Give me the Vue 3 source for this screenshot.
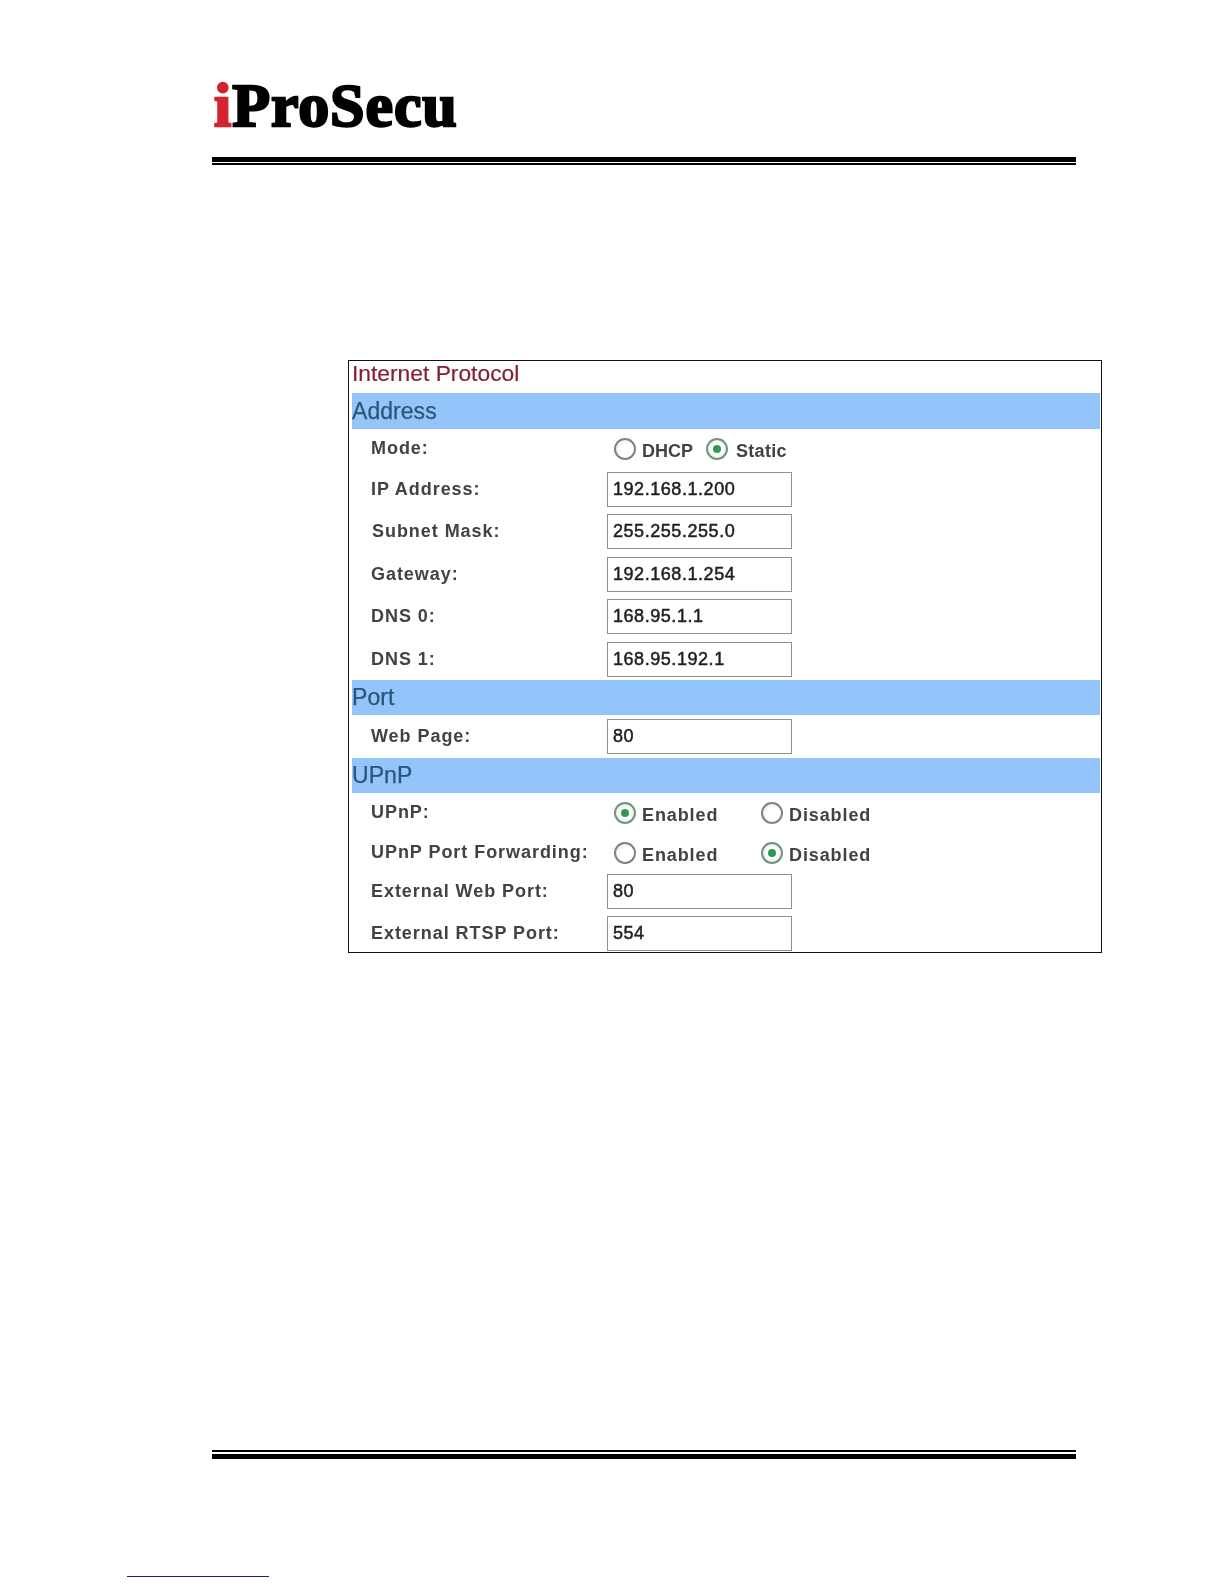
<script setup>
const addressRows = [
  { label: 'IP Address:', value: '192.168.1.200' },
  { label: 'Subnet Mask:', value: '255.255.255.0', nudge: true },
  { label: 'Gateway:', value: '192.168.1.254' },
  { label: 'DNS 0:', value: '168.95.1.1' },
  { label: 'DNS 1:', value: '168.95.192.1' }
]
const upnpRadios = [
  { label: 'UPnP:', enabled: true },
  { label: 'UPnP Port Forwarding:', enabled: false }
]
const upnpInputs = [
  { label: 'External Web Port:', value: '80' },
  { label: 'External RTSP Port:', value: '554' }
]
</script>

<template>
  <div class="page">
    <header class="head">
      <div class="logo"><span class="logo-i">i</span>ProSecu</div>
      <div class="rule-thick"></div>
      <div class="rule-thin"></div>
    </header>

    <section class="panel">
      <div class="blurred">
        <div class="title">Internet Protocol</div>
        <div class="bar bar-address">Address</div>

        <div class="row row-mode">
          <span class="label">Mode:</span>
          <div class="options">
            <span class="radio"></span><span class="opt opt-dhcp">DHCP</span>
            <span class="radio on radio-static"><i class="dot"></i></span><span class="opt opt-static">Static</span>
          </div>
        </div>

        <div class="address-group">
          <div v-for="r in addressRows" :key="r.label" class="row row-input">
            <span class="label" :class="{ nudge: r.nudge }">{{ r.label }}</span>
            <div class="field">{{ r.value }}</div>
          </div>
        </div>

        <div class="bar bar-port">Port</div>
        <div class="row row-input row-web">
          <span class="label">Web Page:</span>
          <div class="field">80</div>
        </div>

        <div class="bar bar-upnp">UPnP</div>
        <div v-for="(r, i) in upnpRadios" :key="r.label" class="row" :class="i === 0 ? 'row-upnp' : 'row-fwd'">
          <span class="label">{{ r.label }}</span>
          <div class="options">
            <div class="choice">
              <span class="radio" :class="{ on: r.enabled }"><i v-if="r.enabled" class="dot"></i></span>
              <span class="opt">Enabled</span>
            </div>
            <div class="choice">
              <span class="radio" :class="{ on: !r.enabled }"><i v-if="!r.enabled" class="dot"></i></span>
              <span class="opt">Disabled</span>
            </div>
          </div>
        </div>

        <div v-for="r in upnpInputs" :key="r.label" class="row row-input">
          <span class="label">{{ r.label }}</span>
          <div class="field">{{ r.value }}</div>
        </div>
      </div>
    </section>

    <footer class="foot">
      <div class="rule-thin foot-thin"></div>
      <div class="rule-thick foot-thick"></div>
      <div class="note-line"></div>
    </footer>
  </div>
</template>

<style>
html, body { margin: 0; background: #fff; }
</style>

<style scoped>
.page {
  width: 1224px;
  height: 1584px;
  overflow: hidden;
  background: #fff;
  font-family: "Liberation Sans", Arial, sans-serif;
}
.head { margin-left: 212px; width: 864px; padding-top: 69px; }
.logo {
  height: 88px;
  padding-left: 2px;
  box-sizing: border-box;
  font-family: "Liberation Serif", "Times New Roman", serif;
  font-weight: 700;
  font-size: 62px;
  line-height: 72px;
  letter-spacing: 0.9px;
  color: #000;
  -webkit-text-stroke: 2.4px #000;
  white-space: nowrap;
}
.logo-i { color: #d2232e; -webkit-text-stroke: 2.4px #d2232e; }
.rule-thick { height: 5px; background: #000; }
.rule-thin { height: 2px; margin-top: 1px; background: #000; }

.panel {
  margin: 195px 0 0 348px;
  width: 752px;
  height: 591px;
  border: 1px solid #111;
  overflow: hidden;
  background: #fff;
}
.blurred { filter: blur(0.45px); }
.title {
  height: 32px;
  padding-left: 3px;
  font-size: 22.8px;
  line-height: 25px;
  color: #84202f;
  -webkit-text-stroke: 0.2px #84202f;
}
.bar {
  margin: 0 1px 0 3px;
  background: #93c5fb;
  font-size: 23px;
  letter-spacing: 0.05px;
  color: #2a5678;
  -webkit-text-stroke: 0.25px #2a5678;
}
.bar-address { height: 36px; line-height: 36px; }
.bar-port { height: 35px; line-height: 35px; }
.bar-upnp { height: 35px; line-height: 34px; }

.address-group { height: 208px; }

.row {
  display: flex;
  padding-left: 22px;
  box-sizing: border-box;
}
.label {
  width: 236px;
  flex: none;
  font-size: 18px;
  font-weight: 700;
  letter-spacing: 0.95px;
  color: #424242;
  white-space: nowrap;
}
.nudge { padding-left: 1px; width: 235px; }
.row-mode { height: 43px; padding-top: 9px; }
.row-upnp { height: 41px; padding-top: 9px; }
.row-fwd { height: 40.5px; padding-top: 8px; }
.row-input { height: 42.4px; align-items: flex-start; }
.row-input .label { line-height: 33px; margin-top: 1px; }
.row-web { height: 42.5px; padding-top: 4px; }

.field {
  width: 185px;
  height: 35px;
  box-sizing: border-box;
  border: 1.5px solid #8e9296;
  padding-left: 5px;
  font-size: 18px;
  line-height: 33px;
  letter-spacing: 0.55px;
  color: #1f1f1f;
  -webkit-text-stroke: 0.5px #1f1f1f;
  background: #fff;
}

.options { display: flex; align-items: flex-start; padding-left: 7px; }
.choice { display: flex; width: 147px; }
.radio {
  flex: none;
  width: 22px;
  height: 22px;
  box-sizing: border-box;
  border: 2px solid #7d8388;
  border-radius: 50%;
  background: radial-gradient(circle at 65% 65%, #fff 45%, #e2e4e6 100%);
  display: flex;
  align-items: center;
  justify-content: center;
}
.radio.on { border-color: #78907f; background: radial-gradient(circle, #fff 40%, #cfe6d3 100%); }
.dot { width: 8px; height: 8px; border-radius: 50%; background: #2f9a4e; }
.radio-static { margin-left: 13px; }
.opt {
  margin-left: 6px;
  padding-top: 3px;
  font-size: 18px;
  font-weight: 700;
  line-height: 21px;
  letter-spacing: 0.9px;
  color: #424242;
  white-space: nowrap;
}
.opt-dhcp { letter-spacing: 0; }
.opt-static { margin-left: 8px; letter-spacing: 0.3px; }

.foot { margin-left: 212px; width: 864px; padding-top: 497px; }
.foot-thin { margin-top: 0; height: 2px; }
.foot-thick { margin-top: 2px; height: 5px; }
.note-line {
  margin: 117px 0 0 -85px;
  width: 142px;
  height: 1px;
  background: #1c1c96;
}
</style>
